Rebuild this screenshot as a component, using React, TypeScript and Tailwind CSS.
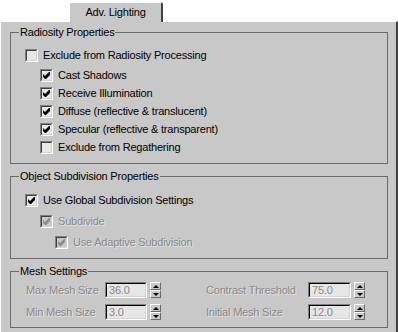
import React from 'react';

const font = '[font-family:"Liberation_Sans",Arial,sans-serif]';

const Check = ({ color }: { color: string }) => (
  <svg width="7" height="7" viewBox="0 0 7 7" className="block">
    <polygon points="0,2 2,4 6,0 7,0 7,3 3,7 2,7 0,5" fill={color} />
  </svg>
);

const Checkbox = ({ checked, disabled }: { checked?: boolean; disabled?: boolean }) => (
  <div className="w-[13px] h-[13px] border border-t-[#808080] border-l-[#808080] border-b-white border-r-white shrink-0">
    <div
      className={`w-full h-full border border-t-[#404040] border-l-[#404040] border-b-[#d4d4d4] border-r-[#d4d4d4] flex items-center justify-center ${
        disabled ? 'bg-[#c8c8c8]' : 'bg-[#e8e8e8]'
      }`}
    >
      {checked && <Check color={disabled ? '#8a8a8a' : '#000'} />}
    </div>
  </div>
);

const CheckRow = ({
  label,
  checked,
  disabled,
  indent,
  h = 'h-[18px]',
}: {
  label: string;
  checked?: boolean;
  disabled?: boolean;
  indent: string;
  h?: string;
}) => (
  <div className={`flex items-center gap-[5px] ${indent} ${h}`}>
    <Checkbox checked={checked} disabled={disabled} />
    <span className={disabled ? 'text-[#8a8a8a] [text-shadow:1px_1px_0_#e2e2e2]' : 'text-black'}>{label}</span>
  </div>
);

const Spinner = () => (
  <div className="w-[11px] h-[16px] flex flex-col bg-[#c8c8c8] shrink-0">
    <div className="flex-1 flex items-center justify-center border border-t-white border-l-white border-b-[#6a6a6a] border-r-[#6a6a6a]">
      <div className="w-0 h-0 border-l-[3px] border-r-[3px] border-b-[3px] border-l-transparent border-r-transparent border-b-black" />
    </div>
    <div className="flex-1 flex items-center justify-center border border-t-white border-l-white border-b-[#6a6a6a] border-r-[#6a6a6a]">
      <div className="w-0 h-0 border-l-[3px] border-r-[3px] border-t-[3px] border-l-transparent border-r-transparent border-t-black" />
    </div>
  </div>
);

const Field = ({ label, value, labelW, inputW }: { label: string; value: string; labelW: string; inputW: string }) => (
  <div className="flex items-center">
    <span className={`${labelW} text-[#8a8a8a] [text-shadow:1px_1px_0_#e2e2e2]`}>{label}</span>
    <div className={`${inputW} h-[16px] border border-t-[#808080] border-l-[#808080] border-b-white border-r-white`}>
      <div className="w-full h-full border border-t-black border-l-black border-b-[#d4d4d4] border-r-[#d4d4d4] bg-[#e6e6e6] text-[#8a8a8a] pl-[2px] flex items-center">
        {value}
      </div>
    </div>
    <div className="w-[3px]" />
    <Spinner />
  </div>
);

const Group = ({ title, children, className }: { title: string; children: React.ReactNode; className: string }) => (
  <fieldset className={`w-[378px] ml-[9px] border border-[#6b6b6b] ${className}`}>
    <legend className="ml-[8px] px-[1px] leading-[13px]">{title}</legend>
    {children}
  </fieldset>
);

export default function App() {
  return (
    <div className={`w-[398px] h-[332px] bg-white text-[11px] leading-[13px] tracking-[-0.2px] text-black ${font}`}>
      <div className="h-[21px] flex items-end pl-[69px]">
        <div className="relative z-10 -mb-px w-[94px] h-[20px] bg-[#c8c8c8] border-t border-l border-white border-r-2 border-r-[#404040] rounded-t-[2px] flex items-center justify-center pb-[1px]">
          Adv. Lighting
        </div>
      </div>
      <div className="h-[311px] bg-[#c8c8c8] border-t border-l border-white border-r-2 border-r-[#404040] overflow-hidden">
        <Group title="Radiosity Properties" className="mt-[4px]">
          <div className="pt-[7px] pb-[7px]">
            <CheckRow label="Exclude from Radiosity Processing" indent="pl-[14px]" />
            <div className="h-[2px]" />
            <CheckRow label="Cast Shadows" checked indent="pl-[29px]" />
            <CheckRow label="Receive Illumination" checked indent="pl-[29px]" />
            <CheckRow label="Diffuse (reflective & translucent)" checked indent="pl-[29px]" />
            <CheckRow label="Specular (reflective & transparent)" checked indent="pl-[29px]" />
            <CheckRow label="Exclude from Regathering" indent="pl-[29px]" />
          </div>
        </Group>
        <Group title="Object Subdivision Properties" className="mt-[6px]">
          <div className="pt-[7px] pb-[5px]">
            <CheckRow label="Use Global Subdivision Settings" checked indent="pl-[14px]" h="h-[21px]" />
            <CheckRow label="Subdivide" checked disabled indent="pl-[29px]" h="h-[21px]" />
            <CheckRow label="Use Adaptive Subdivision" checked disabled indent="pl-[44px]" h="h-[21px]" />
          </div>
        </Group>
        <Group title="Mesh Settings" className="mt-[6px]">
          <div className="pt-[4px] pb-[7px] pl-[15px] flex flex-col gap-[6px]">
            <div className="flex">
              <Field label="Max Mesh Size" value="36.0" labelW="w-[79px]" inputW="w-[42px]" />
              <div className="w-[45px]" />
              <Field label="Contrast Threshold" value="75.0" labelW="w-[102px]" inputW="w-[43px]" />
            </div>
            <div className="flex">
              <Field label="Min Mesh Size" value="3.0" labelW="w-[79px]" inputW="w-[42px]" />
              <div className="w-[45px]" />
              <Field label="Initial Mesh Size" value="12.0" labelW="w-[102px]" inputW="w-[43px]" />
            </div>
          </div>
        </Group>
      </div>
    </div>
  );
}
